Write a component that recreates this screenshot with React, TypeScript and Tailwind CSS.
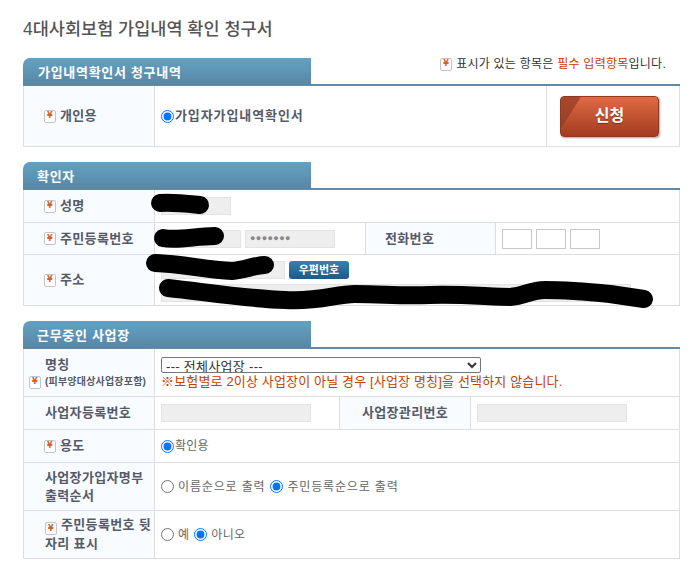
import type { ReactNode } from "react";

const FONT = "font-['Liberation_Sans','Noto_Sans_CJK_KR',sans-serif]";

function Req() {
  return (
    <span className="mr-[4px] inline-flex h-[13px] w-[12px] shrink-0 items-center justify-center rounded-[2px] border border-[#c4c4c4] bg-white align-[-2px] font-['DejaVu_Sans',sans-serif] text-[8px] leading-none font-bold text-[#d0622a]">
      ¥
    </span>
  );
}

function SectionTab({ title, pad = "pl-[14px]" }: { title: string; pad?: string }) {
  return (
    <div className="h-[28px] border-b-2 border-[#6488a8]">
      <div
        className={`relative h-[27px] w-[288px] overflow-hidden rounded-tl-[7px] bg-gradient-to-b from-[#61a2c3] to-[#5a86a5] ${pad} text-[13px] leading-[29px] font-bold tracking-[0.7px] text-white`}
      >
        <span className="absolute inset-0 bg-[linear-gradient(30deg,transparent_58%,#3f5f78_100%)] [clip-path:polygon(0_0,62px_0,52px_100%,0_100%)]" />
        <span className="relative">{title}</span>
      </div>
    </div>
  );
}

function Head({ children, className = "" }: { children: ReactNode; className?: string }) {
  return (
    <div
      className={`flex items-center bg-[#f8fbff] text-[13px] leading-[18px] font-bold tracking-[0.35px] text-[#555a68] ${className}`}
    >
      {children}
    </div>
  );
}

function Field({ className, children }: { className: string; children?: ReactNode }) {
  return <div className={`h-[18px] border border-[#e3e3e3] bg-[#eeeeee] ${className}`}>{children}</div>;
}

function Radio({ checked = false, name }: { checked?: boolean; name: string }) {
  return (
    <input
      type="radio"
      name={name}
      defaultChecked={checked}
      className="m-0 h-[13px] w-[13px] shrink-0 accent-[#0075ff]"
    />
  );
}

function Row({ children, className = "h-[33px]" }: { children: ReactNode; className?: string }) {
  return (
    <div className={`flex border-b border-[#dcdee2] ${className}`}>
      {children}
    </div>
  );
}

const LABEL = "w-[131px] shrink-0 border-r border-[#dcdee2]";

export default function App() {
  return (
    <div className={`relative h-[567px] w-[693px] overflow-hidden bg-white ${FONT}`}>
      <div className="px-[23px] pt-[19px] pr-[13px]">
        <h1 className="h-[21px] text-[17.5px] leading-[21px] font-medium text-[#555555]">
          4대사회보험 가입내역 확인 청구서
        </h1>

        <section className="relative mt-[18px]">
          <p className="absolute top-[-1px] right-[14px] flex items-center text-[12px] leading-[14px] tracking-[0.25px] text-[#333333]">
            <Req />
            표시가 있는 항목은&nbsp;<span className="text-[#c83c00]">필수 입력항목</span>입니다.
          </p>
          <SectionTab title="가입내역확인서 청구내역" pad="pl-[15px]" />
          <div className="border-x border-[#dcdee2]">
            <Row className="h-[61px]">
              <Head className={`${LABEL} pl-[20px]`}>
                <Req />
                개인용
              </Head>
              <div className="flex flex-1 items-center gap-[1px] pl-[6px] text-[13px] font-bold tracking-[0.9px] text-[#555a68]">
                <Radio name="kind" checked />
                가입자가입내역확인서
              </div>
              <div className="flex w-[133px] items-center justify-center border-l border-[#dcdee2] pr-[7px]">
                <button className="relative h-[41px] w-[99px] overflow-hidden rounded-[4px] border border-[#8f3a20] bg-gradient-to-b from-[#e26a45] to-[#a23d20] text-[16px] font-bold text-white shadow-[1px_1px_2px_rgba(0,0,0,0.35)]">
                  <span className="absolute inset-0 bg-[#8e3a24]/70 [clip-path:polygon(0_0,20px_0,0_32px)]" />
                  <span className="relative [text-shadow:0_1px_1px_rgba(0,0,0,0.4)]">신청</span>
                </button>
              </div>
            </Row>
          </div>
        </section>

        <section className="mt-[15px]">
          <SectionTab title="확인자" />
          <div className="border-x border-[#dcdee2]">
            <Row className="h-[33px]">
              <Head className={`${LABEL} pl-[20px]`}>
                <Req />
                성명
              </Head>
              <div className="flex flex-1 items-center pl-[6px]">
                <Field className="w-[70px]" />
              </div>
            </Row>
            <Row className="h-[32px]">
              <Head className={`${LABEL} pl-[20px]`}>
                <Req />
                주민등록번호
              </Head>
              <div className="flex w-[210px] shrink-0 items-center gap-[4px] pl-[6px]">
                <Field className="w-[80px]" />
                <Field className="w-[90px] pl-[4px] text-[9px] leading-[15px] tracking-[0.4px] text-[#888888]">
                  ●●●●●●●
                </Field>
              </div>
              <Head className="w-[131px] shrink-0 border-x border-[#dcdee2] pl-[19px]">전화번호</Head>
              <div className="flex flex-1 items-center gap-[4px] pl-[6px]">
                <div className="h-[20px] w-[30px] border border-[#c8c8c8]" />
                <div className="h-[20px] w-[30px] border border-[#c8c8c8]" />
                <div className="h-[20px] w-[30px] border border-[#c8c8c8]" />
              </div>
            </Row>
            <Row className="h-[51px]">
              <Head className={`${LABEL} pl-[20px]`}>
                <Req />
                주소
              </Head>
              <div className="flex flex-1 flex-col gap-[5px] pt-[6px] pl-[6px]">
                <div className="flex items-center gap-[4px]">
                  <Field className="w-[124px]" />
                  <button className="h-[18px] w-[60px] rounded-[3px] bg-gradient-to-b from-[#3b80ad] to-[#1c5a88] text-[11px] leading-[18px] font-bold text-white">
                    우편번호
                  </button>
                </div>
                <Field className="w-[470px]" />
              </div>
            </Row>
          </div>
        </section>

        <section className="mt-[15px]">
          <SectionTab title="근무중인 사업장" />
          <div className="border-x border-[#dcdee2]">
            <Row className="h-[48px]">
              <Head className={`${LABEL} flex-col !items-start pt-[7px] pl-[5px]`}>
                <span className="pl-[16px]">명칭</span>
                <span className="-mt-[1px] flex items-center text-[10px] tracking-[0.2px]">
                  <Req />
                  (피부양대상사업장포함)
                </span>
              </Head>
              <div className="flex flex-1 flex-col gap-[1px] pt-[8px] pl-[6px]">
                <select className="h-[16px] w-[320px] rounded-[2px] border border-[#767676] bg-white text-[13px] leading-[14px] tracking-[0.3px] text-[#333333]">
                  <option>--- 전체사업장 ---</option>
                </select>
                <p className="text-[13px] leading-[16px] tracking-[0.16px] whitespace-nowrap text-[#c83c00]">
                  ※보험별로 2이상 사업장이 아닐 경우 [사업장 명칭]을 선택하지 않습니다.
                </p>
              </div>
            </Row>
            <Row>
              <Head className={`${LABEL} pl-[21px]`}>사업자등록번호</Head>
              <div className="flex w-[184px] shrink-0 items-center pl-[6px]">
                <Field className="w-[150px]" />
              </div>
              <Head className="w-[132px] shrink-0 justify-center border-x border-[#dcdee2]">사업장관리번호</Head>
              <div className="flex flex-1 items-center pl-[6px]">
                <Field className="w-[150px]" />
              </div>
            </Row>
            <Row>
              <Head className={`${LABEL} pl-[20px]`}>
                <Req />
                용도
              </Head>
              <div className="flex flex-1 items-center gap-[1px] pl-[6px] text-[12px] tracking-[0.2px] text-[#666666]">
                <Radio name="use" checked />
                확인용
              </div>
            </Row>
            <Row className="h-[48px]">
              <Head className={`${LABEL} pl-[21px]`}>
                <span>
                  사업장가입자명부
                  <br />
                  출력순서
                </span>
              </Head>
              <div className="flex flex-1 items-center pl-[6px] text-[12px] tracking-[0.85px] text-[#666666]">
                <Radio name="order" />
                <span className="mr-[5px] ml-[4px]">이름순으로 출력</span>
                <Radio name="order" checked />
                <span className="ml-[4px]">주민등록순으로 출력</span>
              </div>
            </Row>
            <Row className="h-[48px]">
              <Head className={`${LABEL} pl-[21px]`}>
                <span>
                  <Req />
                  주민등록번호 뒷
                  <br />
                  자리 표시
                </span>
              </Head>
              <div className="flex flex-1 items-center pl-[6px] text-[12px] tracking-[0.3px] text-[#666666]">
                <Radio name="mask" />
                <span className="mr-[5px] ml-[4px]">예</span>
                <Radio name="mask" checked />
                <span className="ml-[4px]">아니오</span>
              </div>
            </Row>
          </div>
        </section>
      </div>

      {/* hand-drawn redaction marks over the personal data */}
      <svg
        className="pointer-events-none absolute inset-0"
        width="693"
        height="567"
        viewBox="0 0 693 567"
        fill="none"
        stroke="#000"
        strokeWidth="18"
        strokeLinecap="round"
        strokeLinejoin="round"
      >
        <path d="M160 203C172 202 190 204 200 205" />
        <path d="M163 238C178 241 195 236 215 236" />
        <path d="M155 263C185 264 205 270 232 271C245 270 255 265 265 265" />
        <path d="M168 288C205 292 250 299 285 300C320 302 335 294 355 294C385 294 395 296 430 295C465 294 490 297 510 297C525 296 530 290 545 290C570 290 590 292 610 294L644 299" />
      </svg>
    </div>
  );
}
